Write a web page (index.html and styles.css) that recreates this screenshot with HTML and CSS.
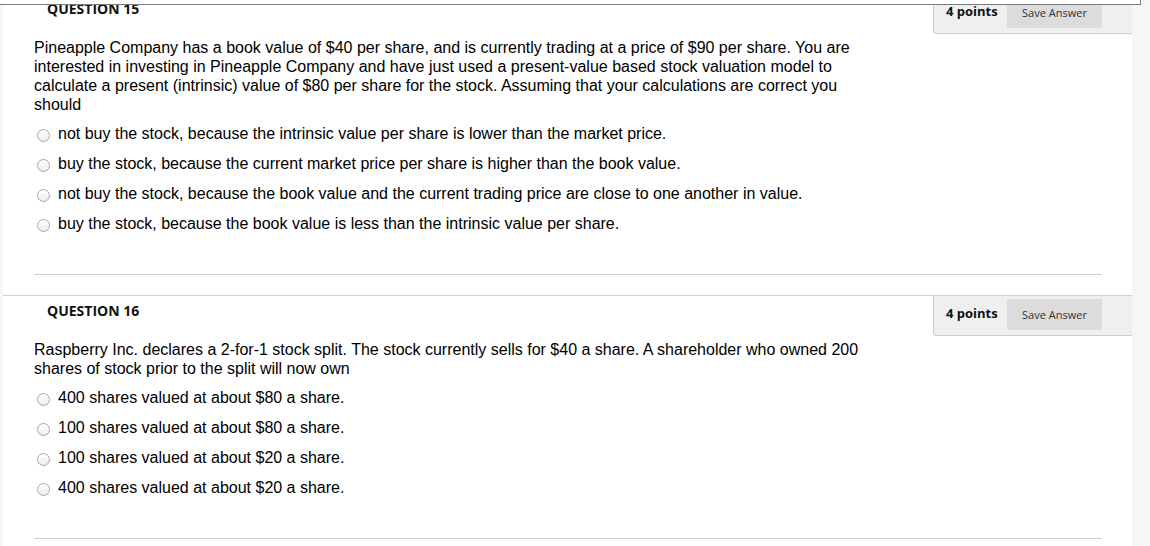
FILE: index.html
```html
<!DOCTYPE html>
<html>
<head>
<meta charset="utf-8">
<link rel="stylesheet" href="styles.css">
</head>
<body>
<div class="topbar"></div>
<div class="page">
  <div class="questions">
    <section class="question">
      <div class="q-head">
        <h3 class="q-title">QUESTION 15</h3>
        <div class="points-box">
          <span class="points">4 points</span>
          <button class="save">Save Answer</button>
        </div>
      </div>
      <p class="q-text">Pineapple Company has a book value of $40 per share, and is currently trading at a price of $90 per share. You are interested in investing in Pineapple Company and have just used a present-value based stock valuation model to calculate a present (intrinsic) value of $80 per share for the stock. Assuming that your calculations are correct you should</p>
      <ul class="options">
        <li><span class="radio"></span>not buy the stock, because the intrinsic value per share is lower than the market price.</li>
        <li><span class="radio"></span>buy the stock, because the current market price per share is higher than the book value.</li>
        <li><span class="radio"></span>not buy the stock, because the book value and the current trading price are close to one another in value.</li>
        <li><span class="radio"></span>buy the stock, because the book value is less than the intrinsic value per share.</li>
      </ul>
      <hr class="sep">
    </section>
    <section class="question">
      <div class="q-head">
        <h3 class="q-title">QUESTION 16</h3>
        <div class="points-box">
          <span class="points">4 points</span>
          <button class="save">Save Answer</button>
        </div>
      </div>
      <p class="q-text">Raspberry Inc. declares a 2-for-1 stock split. The stock currently sells for $40 a share. A shareholder who owned 200 shares of stock prior to the split will now own</p>
      <ul class="options">
        <li><span class="radio"></span>400 shares valued at about $80 a share.</li>
        <li><span class="radio"></span>100 shares valued at about $80 a share.</li>
        <li><span class="radio"></span>100 shares valued at about $20 a share.</li>
        <li><span class="radio"></span>400 shares valued at about $20 a share.</li>
      </ul>
      <hr class="sep">
    </section>
  </div>
</div>
</body>
</html>
```

FILE: styles.css
```css
html, body {
  margin: 0;
  padding: 0;
}
body {
  background: #f6f6f6;
  font-family: "Liberation Sans", Arial, sans-serif;
  color: #000;
  height: 546px;
  overflow: hidden;
  position: relative;
}
.topbar {
  position: absolute;
  top: 0;
  left: 0;
  width: 1140px;
  height: 4px;
  background: #fff;
  border-right: 1px solid #7a7a7a;
  border-bottom: 1px solid #7a7a7a;
  z-index: 5;
}
.page {
  margin-left: 3px;
  width: 1129px;
  height: 546px;
  background: #fff;
  overflow: hidden;
}
.questions {
  margin-top: -7px;
}
.question {
  border-top: 1px solid #cfcfcf;
  padding-bottom: 20px;
}
.q-head {
  display: flex;
  justify-content: space-between;
  align-items: flex-start;
}
.q-title {
  margin: 0;
  padding: 5px 0 0 44px;
  font-family: "Open Sans", sans-serif;
  font-weight: 700;
  font-size: 14px;
  line-height: 20px;
  color: #111;
}
.points-box {
  display: flex;
  align-items: center;
  width: 186px;
  padding: 3px 0 5px 12px;
  background: #efefef;
  border-left: 1px solid #cccccc;
  border-bottom: 1px solid #cccccc;
  border-bottom-left-radius: 4px;
}
.points {
  font-family: "Open Sans", sans-serif;
  font-weight: 700;
  font-size: 13px;
  color: #111;
  width: 61px;
  margin-bottom: 3px;
}
.save {
  width: 95px;
  height: 31px;
  border: none;
  border-radius: 1px;
  background: #dcdcdc;
  font-family: "Open Sans", sans-serif;
  font-size: 11px;
  color: #333;
  padding: 0;
}
.q-text {
  margin: 4px 0 0 31px;
  width: 840px;
  font-size: 16px;
  line-height: 19px;
}
.options {
  list-style: none;
  margin: 10px 0 0 34px;
  padding: 0;
}
.options li {
  display: flex;
  align-items: center;
  font-size: 16px;
  line-height: 19px;
  margin-bottom: 11px;
}
.options li:last-child {
  margin-bottom: 0;
}
.radio {
  width: 11px;
  height: 11px;
  border: 1px solid #a9a9a9;
  border-radius: 50%;
  background: linear-gradient(#ffffff, #ececec);
  margin: 3px 8px 0 0;
  flex: none;
}
.sep {
  margin: 41px 30px 0 31px;
  border: none;
  border-top: 1px solid #cfcfcf;
  height: 0;
}
```
